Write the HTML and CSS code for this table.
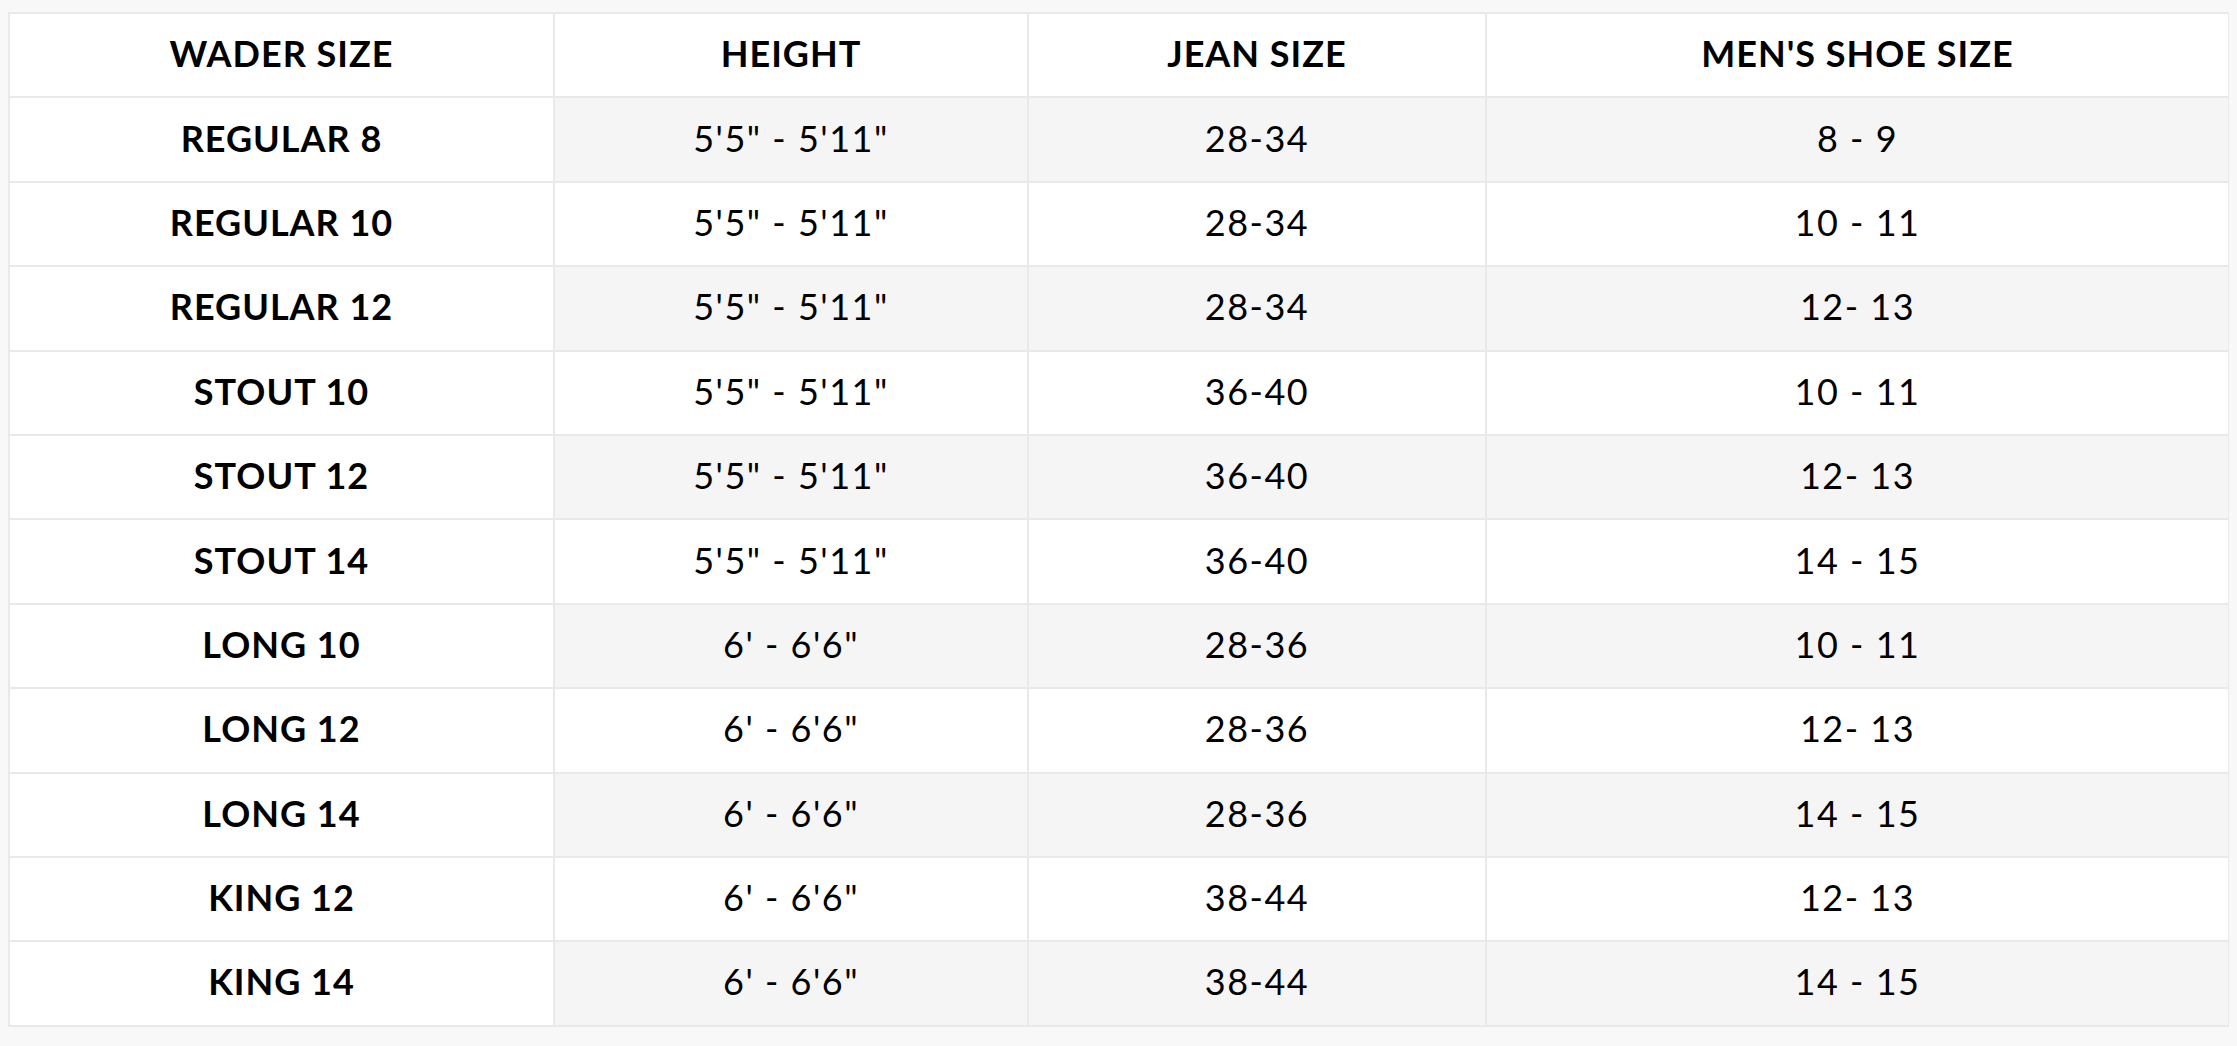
FILE: index.html
```html
<!DOCTYPE html>
<html lang="en">
<head>
<meta charset="utf-8">
<title>Wader Size Chart</title>
<link rel="stylesheet" href="styles.css">
</head>
<body>
<table class="chart">
  <colgroup>
    <col class="c1"><col class="c2"><col class="c3"><col class="c4">
  </colgroup>
  <thead>
    <tr><th>WADER SIZE</th><th>HEIGHT</th><th>JEAN SIZE</th><th>MEN'S SHOE SIZE</th></tr>
  </thead>
  <tbody>
    <tr class="alt"><th>REGULAR 8</th><td>5'5" - 5'11"</td><td>28-34</td><td>8 - 9</td></tr>
    <tr><th>REGULAR 10</th><td>5'5" - 5'11"</td><td>28-34</td><td>10 - 11</td></tr>
    <tr class="alt"><th>REGULAR 12</th><td>5'5" - 5'11"</td><td>28-34</td><td>12- 13</td></tr>
    <tr><th>STOUT 10</th><td>5'5" - 5'11"</td><td>36-40</td><td>10 - 11</td></tr>
    <tr class="alt"><th>STOUT 12</th><td>5'5" - 5'11"</td><td>36-40</td><td>12- 13</td></tr>
    <tr><th>STOUT 14</th><td>5'5" - 5'11"</td><td>36-40</td><td>14 - 15</td></tr>
    <tr class="alt"><th>LONG 10</th><td>6' - 6'6"</td><td>28-36</td><td>10 - 11</td></tr>
    <tr><th>LONG 12</th><td>6' - 6'6"</td><td>28-36</td><td>12- 13</td></tr>
    <tr class="alt"><th>LONG 14</th><td>6' - 6'6"</td><td>28-36</td><td>14 - 15</td></tr>
    <tr><th>KING 12</th><td>6' - 6'6"</td><td>38-44</td><td>12- 13</td></tr>
    <tr class="alt"><th>KING 14</th><td>6' - 6'6"</td><td>38-44</td><td>14 - 15</td></tr>
  </tbody>
</table>
</body>
</html>
```
FILE: styles.css
```css
html, body {
  background: #f8f8f8;
}
body {
  margin: 12px 8px;
  font-family: Lato, "Open Sans", "Liberation Sans", sans-serif;
  color: #000;
}
.chart {
  width: 2220px;
  border-collapse: collapse;
  table-layout: fixed;
  background: #fff;
  border: 2px solid #e9e9e9;
}
.c1 { width: 545px; }
.c2 { width: 474px; }
.c3 { width: 458px; }
.c4 { width: 743px; }
.chart th,
.chart td {
  box-sizing: border-box;
  height: 84.4px;
  padding: 0 0 4px;
  border: 2px solid #e9e9e9;
  text-align: center;
  vertical-align: middle;
  font-size: 36px;
  letter-spacing: 1px;
  background: #fff;
}
.chart th {
  font-weight: 700;
}
.chart td {
  font-weight: 400;
  letter-spacing: 1.5px;
}
.chart tr.alt td {
  background: #f5f5f5;
}
```
